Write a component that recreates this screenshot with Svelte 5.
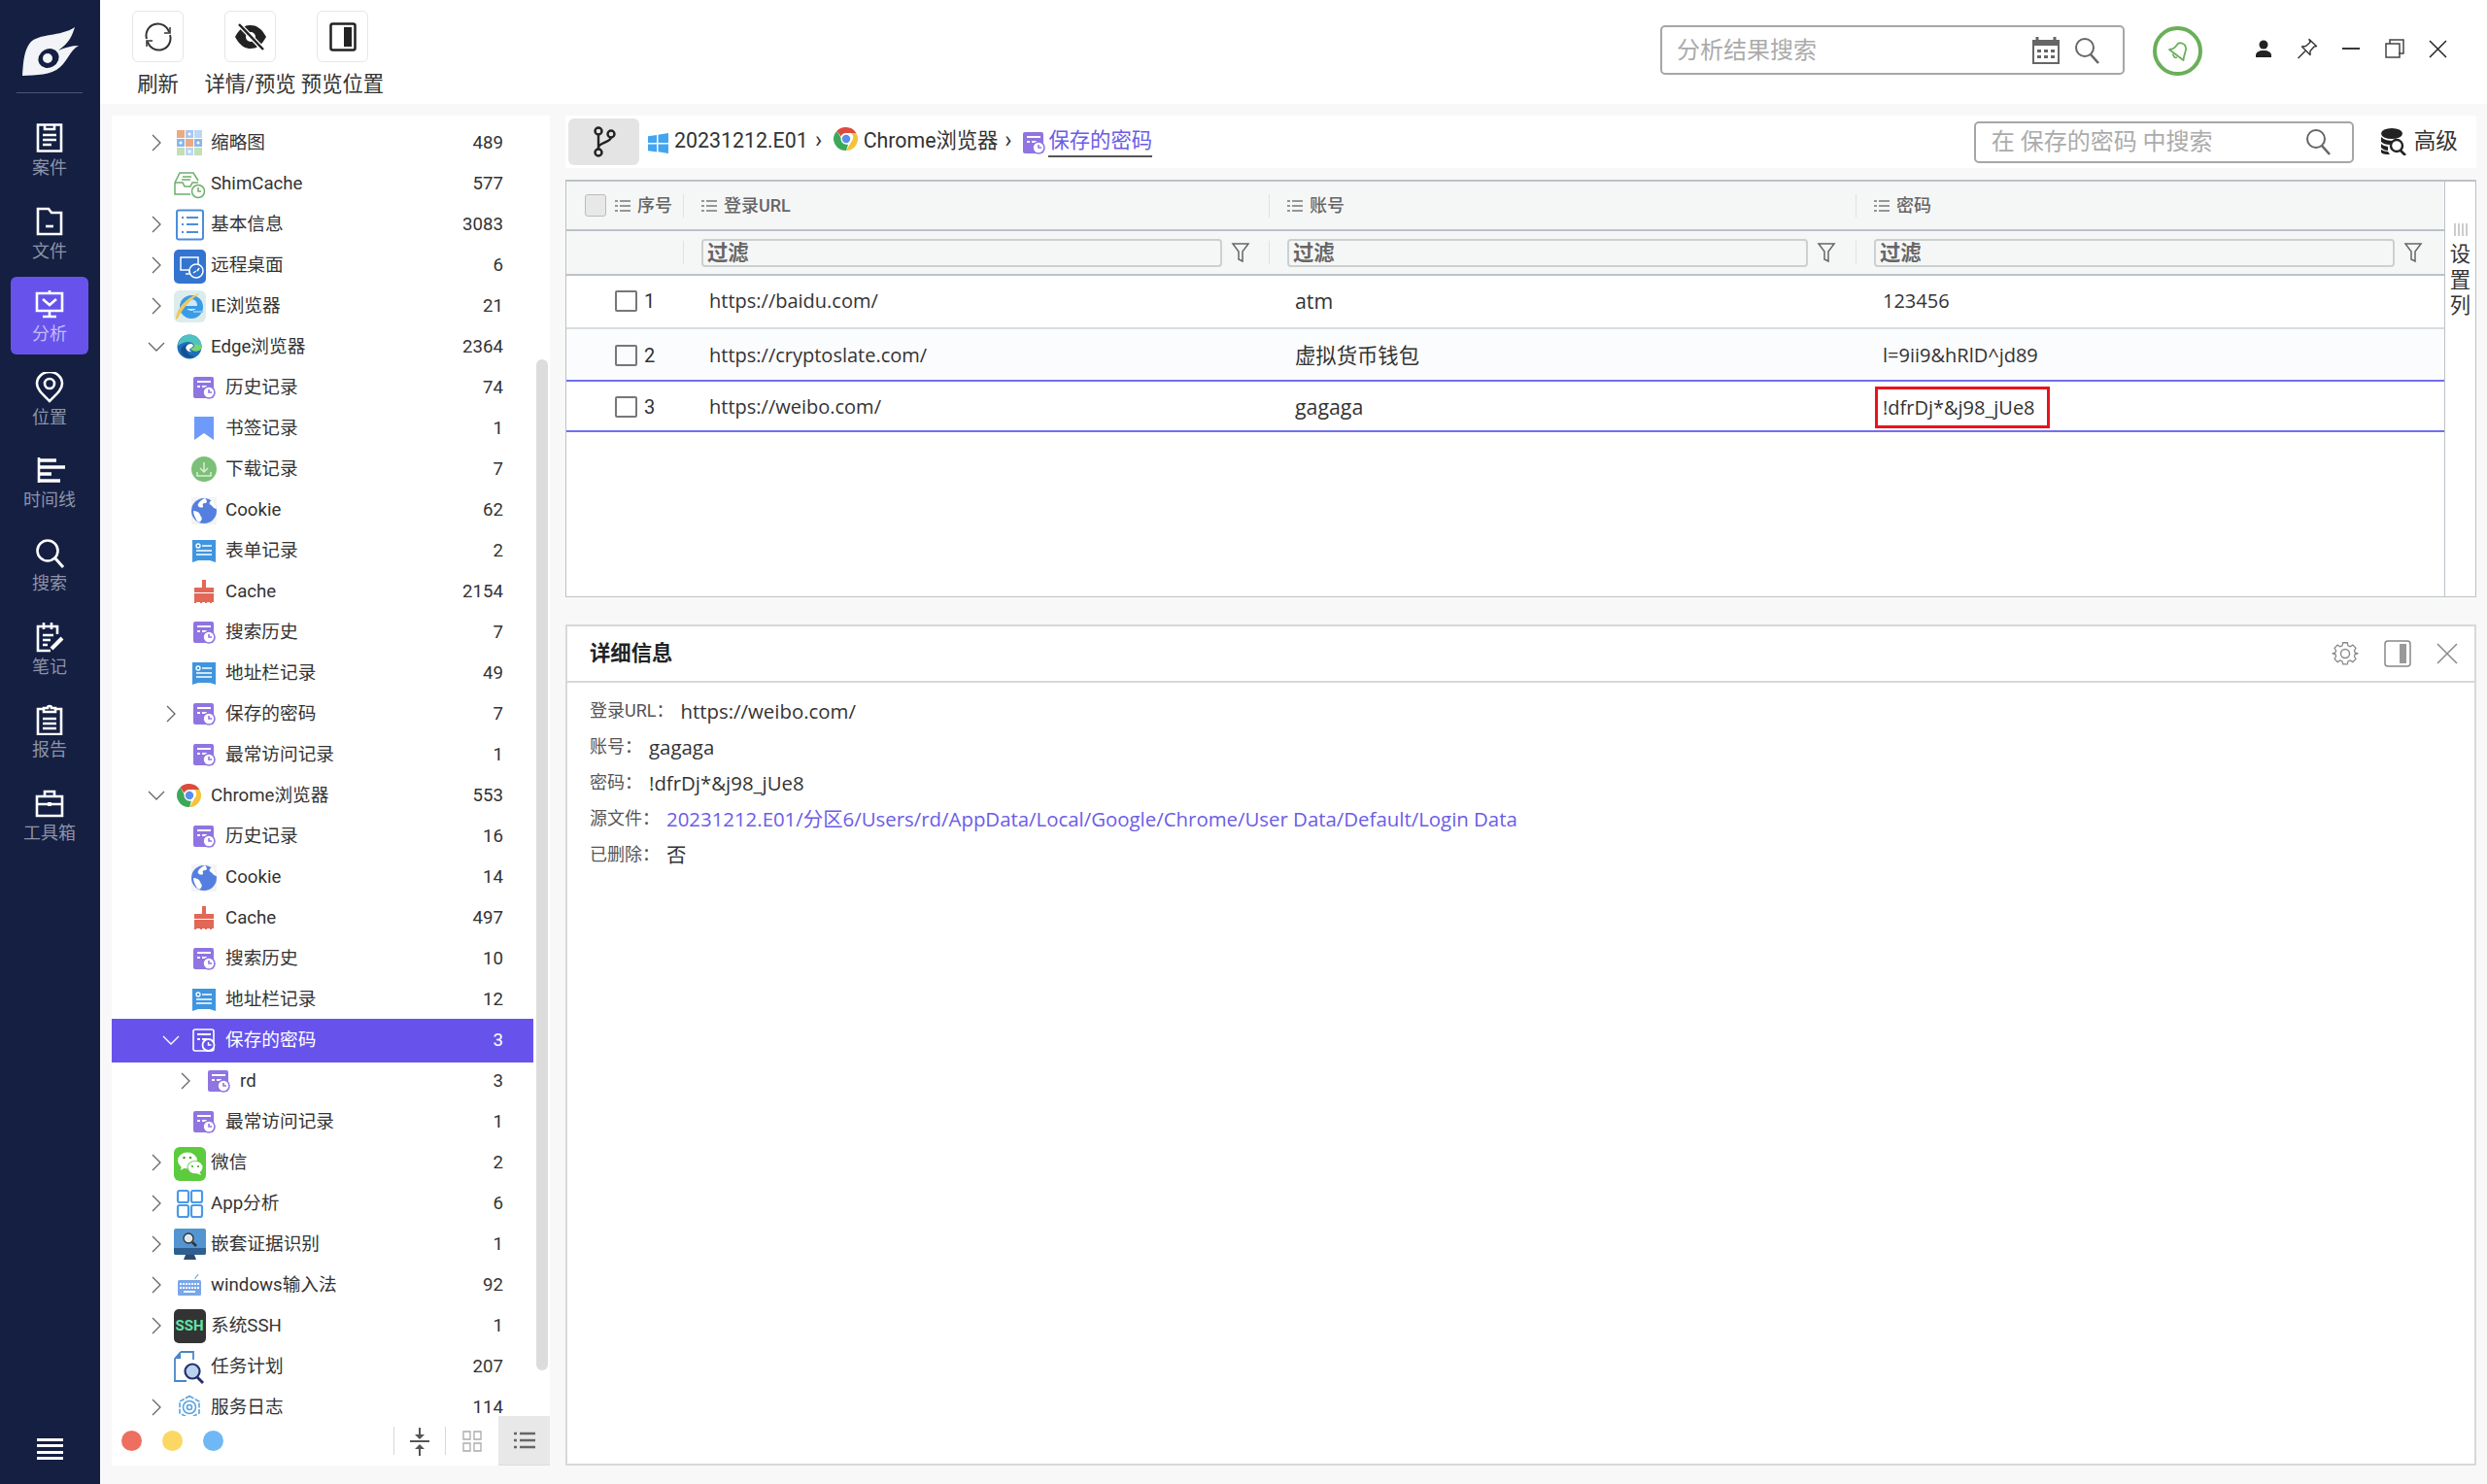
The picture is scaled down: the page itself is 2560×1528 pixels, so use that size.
<script>
	const nav = [
		{ key: 'case', label: '案件' },
		{ key: 'file', label: '文件' },
		{ key: 'analysis', label: '分析', active: true },
		{ key: 'place', label: '位置' },
		{ key: 'timeline', label: '时间线' },
		{ key: 'search', label: '搜索' },
		{ key: 'note', label: '笔记' },
		{ key: 'report', label: '报告' },
		{ key: 'tools', label: '工具箱' }
	];

	// open: true = down chevron, false = right chevron, null = none
	const tree = [
		{ level: 0, open: false, icon: 'thumb', label: '缩略图', count: 489 },
		{ level: 0, open: null, icon: 'shim', label: 'ShimCache', count: 577 },
		{ level: 0, open: false, icon: 'info', label: '基本信息', count: 3083 },
		{ level: 0, open: false, icon: 'remote', label: '远程桌面', count: 6 },
		{ level: 0, open: false, icon: 'ie', label: 'IE浏览器', count: 21 },
		{ level: 0, open: true, icon: 'edge', label: 'Edge浏览器', count: 2364 },
		{ level: 1, open: null, icon: 'hist', label: '历史记录', count: 74 },
		{ level: 1, open: null, icon: 'mark', label: '书签记录', count: 1 },
		{ level: 1, open: null, icon: 'down', label: '下载记录', count: 7 },
		{ level: 1, open: null, icon: 'globe', label: 'Cookie', count: 62 },
		{ level: 1, open: null, icon: 'form', label: '表单记录', count: 2 },
		{ level: 1, open: null, icon: 'broom', label: 'Cache', count: 2154 },
		{ level: 1, open: null, icon: 'hist', label: '搜索历史', count: 7 },
		{ level: 1, open: null, icon: 'form', label: '地址栏记录', count: 49 },
		{ level: 1, open: false, icon: 'hist', label: '保存的密码', count: 7 },
		{ level: 1, open: null, icon: 'hist', label: '最常访问记录', count: 1 },
		{ level: 0, open: true, icon: 'chrome', label: 'Chrome浏览器', count: 553 },
		{ level: 1, open: null, icon: 'hist', label: '历史记录', count: 16 },
		{ level: 1, open: null, icon: 'globe', label: 'Cookie', count: 14 },
		{ level: 1, open: null, icon: 'broom', label: 'Cache', count: 497 },
		{ level: 1, open: null, icon: 'hist', label: '搜索历史', count: 10 },
		{ level: 1, open: null, icon: 'form', label: '地址栏记录', count: 12 },
		{ level: 1, open: true, icon: 'hist', label: '保存的密码', count: 3, selected: true },
		{ level: 2, open: false, icon: 'hist', label: 'rd', count: 3 },
		{ level: 1, open: null, icon: 'hist', label: '最常访问记录', count: 1 },
		{ level: 0, open: false, icon: 'wechat', label: '微信', count: 2 },
		{ level: 0, open: false, icon: 'app', label: 'App分析', count: 6 },
		{ level: 0, open: false, icon: 'nested', label: '嵌套证据识别', count: 1 },
		{ level: 0, open: false, icon: 'keyboard', label: 'windows输入法', count: 92 },
		{ level: 0, open: false, icon: 'ssh', label: '系统SSH', count: 1 },
		{ level: 0, open: null, icon: 'task', label: '任务计划', count: 207 },
		{ level: 0, open: false, icon: 'service', label: '服务日志', count: 114 }
	];

	const columns = ['登录URL', '账号', '密码'];

	const rows = [
		{ id: 1, url: 'https://baidu.com/', user: 'atm', pass: '123456' },
		{ id: 2, url: 'https://cryptoslate.com/', user: '虚拟货币钱包', pass: 'l=9ii9&hRlD^jd89' },
		{ id: 3, url: 'https://weibo.com/', user: 'gagaga', pass: '!dfrDj*&j98_jUe8', active: true }
	];
</script>

{#snippet navIcon(key)}
	<svg class="nav-icon" viewBox="0 0 32 32" fill="none" stroke="currentColor" stroke-width="2.6">
		{#if key === 'case'}
			<path d="M4 2.5h24v27H4z" /><path d="M11 3v4h10V3M9 13h14M9 18h14M9 23h9" />
		{:else if key === 'file'}
			<path d="M4 3h11l3 4h10v22H4z" /><path d="M12 21h8" />
		{:else if key === 'analysis'}
			<path d="M3 5h26v18H3zM16 2v3M16 23v5M9 29h14" /><path d="M9 11l7 6 7-6" />
		{:else if key === 'place'}
			<path d="M16 30C9 23 3 18 3 12a13 12 0 0 1 26 0c0 6-6 11-13 18z" /><circle cx="16" cy="12" r="5" />
		{:else if key === 'timeline'}
			<path d="M5 3v26" /><path stroke-width="3.4" d="M5 6h18M5 13h27M5 20h13M5 27h22" />
		{:else if key === 'search'}
			<circle cx="14" cy="13" r="10.5" /><path stroke-width="3" d="M22 21l8 9" />
		{:else if key === 'note'}
			<path d="M24 13V5H4v25h13M10 1v7M18 1v7M9 14h11M9 19h8M9 24h5" /><path stroke-width="4" d="M18 28l11-11" />
		{:else if key === 'report'}
			<path d="M10 5H4v26h24V5h-6" /><path d="M10 8V4h4a2 2 0 0 1 4 0h4v4zM9 15h14M9 20h14M9 25h14" />
		{:else}
			<path d="M3 9h26v20H3zM11 9V4h10v5M3 17h26" /><path stroke-width="4" d="M16 15v4" />
		{/if}
	</svg>
{/snippet}

{#snippet histIcon(white)}
	<svg class="ti s24" viewBox="0 0 24 24">
		{#if white}
			<rect x="1" y="1" width="21" height="22" rx="2" fill="none" stroke="#fff" stroke-width="1.6" />
			<path d="M5 6h14M5 11h3M10 11h5" stroke="#fff" stroke-width="2" />
			<circle cx="16.500" cy="17" r="6" fill="#6753ec" stroke="#fff" stroke-width="1.8" />
			<path d="M16.500 14v3h3" fill="none" stroke="#fff" stroke-width="1.5" />
		{:else}
			<rect x="1" y="1" width="21" height="22" rx="2" fill="#8f74e2" />
			<path d="M5 6h14M5 11h3M10 11h5" stroke="#fff" stroke-width="2" />
			<circle cx="17" cy="17" r="6" fill="#fff" stroke="#8f74e2" stroke-width="1.6" />
			<path d="M17 14v3h3" fill="none" stroke="#8f74e2" stroke-width="1.600" />
		{/if}
	</svg>
{/snippet}

{#snippet chromeIcon(cls)}
	<svg class={cls} viewBox="0 0 26 26">
		<path d="M13 1a12 12 0 0 1 10.400 6H13a6 6 0 0 0-5.500 3.600L3.500 4.700A12 12 0 0 1 13 1z" fill="#dd4b3e" />
		<path d="M23.400 7A12 12 0 0 1 13 25l5.200-9a6 6 0 0 0 0-9z" fill="#f5c33b" />
		<path d="M13 25A12 12 0 0 1 3.500 4.700L8.700 13.700A6 6 0 0 0 15 18.700z" fill="#3da85a" />
		<circle cx="13" cy="13" r="5.500" fill="#fff" /><circle cx="13" cy="13" r="4.200" fill="#5a8ee8" />
	</svg>
{/snippet}

{#snippet treeIcon(name, selected)}
	{#if name === 'hist'}
		{@render histIcon(selected)}
	{:else if name === 'thumb'}
		<svg class="ti s26" viewBox="0 0 26 26">
			<rect x="0" y="0" width="8" height="8" fill="#eda884" /><rect x="9" y="0" width="8" height="8" fill="#a7c6ee" /><rect x="18" y="0" width="8" height="8" fill="#bcd6f3" />
			<rect x="0" y="9" width="8" height="8" fill="#8ab6e8" /><rect x="9" y="9" width="8" height="8" fill="#eda884" /><rect x="18" y="9" width="8" height="8" fill="#8ab6e8" />
			<rect x="0" y="18" width="8" height="8" fill="#c3dfb8" /><rect x="9" y="18" width="8" height="8" fill="#bcd6f3" /><rect x="18" y="18" width="8" height="8" fill="#c3dfb8" />
			<circle cx="4" cy="13" r="1.500" fill="#fff" /><circle cx="13" cy="4" r="1.500" fill="#fff" /><circle cx="22" cy="13" r="1.500" fill="#fff" /><circle cx="13" cy="22" r="1.500" fill="#fff" />
		</svg>
	{:else if name === 'shim'}
		<svg class="ti s33" viewBox="0 0 33 33" fill="none" stroke="#6cae6c" stroke-width="1.500">
			<path d="M1 15l5-10h14l5 8M1 15v12h16M1 15h8l2 4h6l2-4h6" /><path d="M9 9h9M8 12h9" />
			<circle cx="25" cy="24" r="6.500" fill="#fff" /><path d="M25 20v4h3" />
		</svg>
	{:else if name === 'info'}
		<svg class="ti s33" viewBox="0 0 33 33">
			<rect x="3" y="1.500" width="27" height="30" rx="2" fill="#fff" stroke="#4a8edb" stroke-width="2" />
			<path d="M8 9h2M13 9h12M8 16h2M13 16h12M8 24h2M13 24h12" stroke="#4a8edb" stroke-width="1.800" />
		</svg>
	{:else if name === 'remote'}
		<svg class="ti s33" viewBox="0 0 33 33">
			<rect width="33" height="35" rx="5" fill="#3374d0" />
			<path d="M7 8h18v13H7zM16 21v3M12 25h6" fill="none" stroke="#fff" stroke-width="1.500" />
			<circle cx="23" cy="22" r="7" fill="#3374d0" stroke="#fff" stroke-width="1.500" />
			<path d="M20 24l3-2M24 22l2-3" stroke="#fff" stroke-width="1.500" />
		</svg>
	{:else if name === 'ie'}
		<svg class="ti s33" viewBox="0 0 33 33">
			<rect width="33" height="33" rx="6" fill="#dcecec" />
			<circle cx="18" cy="17" r="12" fill="#3a9be6" />
			<circle cx="18" cy="15" r="6" fill="#cfe8fa" />
			<path d="M8 16h22v3H8zM21 21h9v2h-9z" fill="#3a9be6" /><path d="M20 21l10 0 0 2-10 0z" fill="#fff" opacity=".4" />
			<path d="M2 30C2 20 12 7 27 3 16 10 8 20 4 29z" fill="#edc95c" />
		</svg>
	{:else if name === 'edge'}
		<svg class="ti s26" viewBox="0 0 26 26">
			<circle cx="13" cy="13" r="12.500" fill="#1c6fb8" />
			<path d="M1 12C2 5 7 .5 13 .5 20 .5 25.500 6 25.500 13c0 3-3 4.500-6 4.500-3 0-5-1-5-3 3 0 4-2 3-4C15 7 8 7 1 12z" fill="#4fc3c0" />
			<path d="M25.500 13c0 3-3 4.500-6 4.500-3 0-5-1-5-3 3 0 4-2 3-4 3 0 7 1 8 2.500z" fill="#7ed36b" />
			<path d="M13 10c-3 1-4 4-3 7s4 6 8 6c-5 3-11 1-13-3S5 11 13 10z" fill="#15508f" />
			<path d="M9.500 13c1-2 3-3 5-3 2 0 3 2 2 3-1 1-2 1-3 2-1 2 1 3 2 3-3 1-7-2-6-5z" fill="#fff" />
		</svg>
	{:else if name === 'chrome'}
		{@render chromeIcon('ti s26')}
	{:else if name === 'mark'}
		<svg class="ti s24" viewBox="0 0 24 24"><path d="M2 0h20v24l-10-7L2 24z" fill="#6e9bfb" /></svg>
	{:else if name === 'down'}
		<svg class="ti s26" viewBox="0 0 26 26">
			<circle cx="13" cy="13" r="13" fill="#7cbf78" />
			<path d="M13 6v10M9 12l4 4 4-4M6 16v4h14v-4" fill="none" stroke="#d6efd2" stroke-width="1.500" />
		</svg>
	{:else if name === 'globe'}
		<svg class="ti s26" viewBox="0 0 26 26">
			<rect width="26" height="28" fill="#f4f4f4" />
			<circle cx="13" cy="14" r="13" fill="#557fdf" />
			<path d="M14 1c3 3 2 5 0 5s-3 1-2 3-4 2-5 0 1-5 7-8zM2 14c3 0 6 1 7 4s3 3 1 6-4 1-5-1-3-5-3-9zM21 3c3 3 5 6 5 9-3 0-4-3-6-4s-2-3 1-5z" fill="#fff" />
		</svg>
	{:else if name === 'form'}
		<svg class="ti s24" viewBox="0 0 24 24">
			<path d="M0 1h24v23l-6-2H6l-6 2z" fill="#3f95e0" />
			<circle cx="6" cy="7" r="2" fill="none" stroke="#fff" stroke-width="1.300" /><path d="M10 7h10M4 12h16M4 16h16" stroke="#fff" stroke-width="1.500" />
		</svg>
	{:else if name === 'broom'}
		<svg class="ti s24" viewBox="0 0 24 24">
			<path d="M10 0h4v8h8v5H2V8h8zM2 14h20v9h-2v1h-2v-1h-3v1h-2v-1h-3v1H8v-1H4v1H2z" fill="#e26757" />
		</svg>
	{:else if name === 'wechat'}
		<svg class="ti s33" viewBox="0 0 33 33">
			<rect width="33" height="35" rx="6" fill="#5ccb3e" />
			<ellipse cx="14" cy="14" rx="10" ry="8.500" fill="#fff" /><path d="M8 19l-1 5 5-3z" fill="#fff" />
			<ellipse cx="22" cy="21" rx="8.500" ry="7" fill="#5ccb3e" /><ellipse cx="22" cy="21" rx="7.500" ry="6.300" fill="#fff" />
			<path d="M26 25l2 4-5-2z" fill="#fff" />
			<circle cx="10.500" cy="11" r="1.300" fill="#4aa830" /><circle cx="17" cy="11" r="1.300" fill="#4aa830" />
			<circle cx="19" cy="20" r="1.100" fill="#4aa830" /><circle cx="25" cy="20" r="1.100" fill="#4aa830" />
		</svg>
	{:else if name === 'app'}
		<svg class="ti s33" viewBox="0 0 33 33" fill="none" stroke="#4a9ae6" stroke-width="2.200">
			<rect x="4" y="3" width="11" height="12" rx="2" /><rect x="18" y="3" width="11" height="12" rx="2" />
			<rect x="4" y="18" width="11" height="12" rx="2" /><rect x="18" y="18" width="11" height="12" rx="2" />
		</svg>
	{:else if name === 'nested'}
		<svg class="ti s33" viewBox="0 0 33 33">
			<rect y="0" width="33" height="27" rx="2" fill="#5295d1" /><path d="M0 20h33v5a2 2 0 0 1-2 2H2a2 2 0 0 1-2-2z" fill="#2f5f90" />
			<path d="M12 27h9l2 5H10z" fill="#2f4a6e" />
			<circle cx="15" cy="10" r="5" fill="#dfe8f0" stroke="#333" stroke-width="1.300" /><path d="M19 14l4 4" stroke="#333" stroke-width="2.500" />
		</svg>
	{:else if name === 'keyboard'}
		<svg class="ti s26" viewBox="0 0 26 26">
			<path d="M19 7c0-3 2-2 3-5" fill="none" stroke="#7aa7e0" stroke-width="1.200" />
			<rect x="1" y="8" width="24" height="16" rx="1.500" fill="#7aa7e8" />
			<path d="M3 12h20M3 16h20" stroke="#fff" stroke-width="1.800" stroke-dasharray="2 1" /><path d="M7 20h12" stroke="#fff" stroke-width="1.800" />
		</svg>
	{:else if name === 'ssh'}
		<span class="ssh">SSH</span>
	{:else if name === 'task'}
		<svg class="ti s33" viewBox="0 0 33 33" fill="none">
			<path d="M7 1h13v8M7 1L1 8v23h12" stroke="#4a86c8" stroke-width="1.800" /><path d="M7 1v7H1z" fill="#4a86c8" />
			<circle cx="19" cy="21" r="7.500" fill="#b9d2ee" stroke="#26306e" stroke-width="2.200" /><path d="M24 27l6 6" stroke="#26306e" stroke-width="3" />
		</svg>
	{:else if name === 'service'}
		<svg class="ti s26" viewBox="0 0 26 26" fill="none" stroke="#59a2e0" stroke-width="1.600">
			<path d="M13 1.500l10 5.500v12l-10 5.500L3 19V7z" stroke-dasharray="5 1.500" /><circle cx="13" cy="13" r="6.500" /><circle cx="13" cy="13" r="2.500" />
		</svg>
	{/if}
{/snippet}

{#snippet listGlyph()}
	<svg class="list-glyph" viewBox="0 0 16 14" stroke="#777" stroke-width="1.500"><path d="M0 2h3M5 2h11M0 7h3M5 7h11M0 12h3M5 12h11" /></svg>
{/snippet}

{#snippet filterGlyph()}
	<svg class="filter-glyph" viewBox="0 0 20 22" fill="none" stroke="#666" stroke-width="1.500"><path d="M2 2h16l-6 8v10l-4-2v-8z" /></svg>
{/snippet}

{#snippet magnifier()}
	<svg class="magnifier" viewBox="0 0 26 28" fill="none" stroke="#666" stroke-width="2"><circle cx="11" cy="11" r="9" /><path stroke-width="2.600" d="M17 18l8 9" /></svg>
{/snippet}

<div class="app">
	<aside class="sidebar">
		<div class="logo">
			<svg viewBox="0 0 103 95" width="103" height="95">
				<path d="M23 78C24 62 25 52 31 44 40 34 62 38 77 28 74 38 70 45 60 52 66 49 74 47 81 47 72 52 70 62 62 69 52 78 38 77 23 78z" fill="#f2f4f8" />
				<ellipse cx="50" cy="60" rx="11" ry="9.500" transform="rotate(-30 50 60)" fill="#141f42" />
				<circle cx="49" cy="60" r="5" fill="#f2f4f8" />
			</svg>
		</div>
		<nav class="nav">
			{#each nav as item}
				<div class="nav-item" class:active={item.active}>
					{@render navIcon(item.key)}
					<span>{item.label}</span>
				</div>
			{/each}
		</nav>
		<div class="hamburger"><i></i><i></i><i></i><i></i></div>
	</aside>

	<div class="main">
		<header class="topbar">
			<div class="tool">
				<div class="tool-btn">
					<svg viewBox="0 0 30 30" width="30" height="30" fill="none" stroke="#333" stroke-width="2">
						<path d="M3 17A12 12 0 0 1 26 10M27 13A12 12 0 0 1 4 20" />
						<path d="M27 5v6h-6M3 25v-6h6" stroke-width="1.500" />
					</svg>
				</div>
				<span>刷新</span>
			</div>
			<div class="tool">
				<div class="tool-btn">
					<svg viewBox="0 0 34 30" width="34" height="30">
						<path d="M1 15C6 6 11 3 17 3s11 3 16 12c-5 9-10 12-16 12S6 24 1 15z" fill="#222" />
						<circle cx="17" cy="15" r="5" fill="#fff" />
						<path d="M5 2l25 26" stroke="#fff" stroke-width="5" /><path d="M5 2l25 26" stroke="#222" stroke-width="2.500" />
					</svg>
				</div>
				<span>详情/预览</span>
			</div>
			<div class="tool">
				<div class="tool-btn">
					<svg viewBox="0 0 28 30" width="28" height="30"><rect x="1.500" y="1.500" width="25" height="27" rx="2" fill="#fff" stroke="#222" stroke-width="2.500" /><rect x="15" y="5" width="8" height="20" fill="#222" /></svg>
				</div>
				<span>预览位置</span>
			</div>

			<div class="global-search">
				<span class="placeholder">分析结果搜索</span>
				<svg class="calendar" viewBox="0 0 30 30">
					<path d="M1 4h28v25H1z" fill="#666" /><path d="M6 1v6M24 1v6" stroke="#666" stroke-width="3" /><path d="M3 10h24v17H3z" fill="#fff" />
					<path d="M6 14h4v3H6zM13 14h4v3h-4zM20 14h4v3h-4zM6 20h4v3H6zM13 20h4v3h-4zM20 20h4v3h-4z" fill="#666" />
				</svg>
				{@render magnifier()}
			</div>
			<div class="status">
				<svg viewBox="0 0 26 26" width="26" height="26" fill="none" stroke="#6aaf5a" stroke-width="1.800" stroke-linejoin="round">
					<path d="M4 11C8 11 10 9 12 6 14 3 20 4 21 9 22 12 19 15 18.500 22z" />
					<path d="M8 15.500C7.500 18 10 20 12 19" />
				</svg>
			</div>
			<div class="window-ctrl">
				<span class="ctrl">
					<svg viewBox="0 0 16 18" width="16" height="18"><circle cx="8" cy="5" r="4.500" fill="#222" /><path d="M0 18v-2c0-3 3-5 8-5s8 2 8 5v2z" fill="#222" /></svg>
				</span>
				<span class="ctrl">
					<svg viewBox="0 0 22 22" width="22" height="22" fill="none" stroke="#333" stroke-width="1.400" stroke-linejoin="round">
						<path d="M13 1.500l7.500 7-2.500.500-4 4.500v4l-8.500-8.500 4-.500 4.500-4z" /><path d="M9 13.500l-7.500 7.500" />
					</svg>
				</span>
				<span class="ctrl"><svg viewBox="0 0 18 4" width="18" height="4"><path d="M0 2h18" stroke="#222" stroke-width="1.800" /></svg></span>
				<span class="ctrl">
					<svg viewBox="0 0 20 20" width="20" height="20" fill="none" stroke="#444" stroke-width="1.500"><path d="M5 5V1h14v14h-5" /><rect x="1" y="5" width="14" height="14" /></svg>
				</span>
				<span class="ctrl"><svg viewBox="0 0 19 19" width="19" height="19"><path d="M1 1l17 17M18 1L1 18" stroke="#222" stroke-width="1.500" /></svg></span>
			</div>
		</header>

		<div class="content">
			<section class="tree-panel">
				<div class="tree">
					{#each tree as node}
						<div class="node level-{node.level}" class:selected={node.selected}>
							<span class="chev">
								{#if node.open === true}
									<svg viewBox="0 0 18 10" width="18" height="10" fill="none" stroke="currentColor" stroke-width="1.300"><path d="M1 1l8 8 8-8" /></svg>
								{:else if node.open === false}
									<svg viewBox="0 0 10 18" width="10" height="18" fill="none" stroke="currentColor" stroke-width="1.300"><path d="M1 1l8 8-8 8" /></svg>
								{/if}
							</span>
							<span class="node-icon">{@render treeIcon(node.icon, node.selected)}</span>
							<span class="node-label">{node.label}</span>
							<span class="node-count">{node.count}</span>
						</div>
					{/each}
				</div>
				<div class="scroll-thumb"></div>
				<footer class="tree-foot">
					<i class="dot red"></i><i class="dot yellow"></i><i class="dot blue"></i>
					<div class="foot-tools">
						<span class="foot-btn wide">
							<svg viewBox="0 0 20 30" width="20" height="30" fill="#555"><path d="M9 1h2v7h4l-5 5-5-5h4zM0 14h20v2H0zM10 18l5 5h-4v7H9v-7H5z" /></svg>
						</span>
						<span class="foot-btn">
							<svg viewBox="0 0 20 22" width="20" height="22" fill="none" stroke="#aaa" stroke-width="1.300"><path d="M1 1h7v8H1zM12 1h7v8h-7zM1 13h7v8H1zM12 13h7v8h-7z" /></svg>
						</span>
						<span class="foot-btn current">
							<svg viewBox="0 0 22 18" width="22" height="18" stroke="#666" stroke-width="2.600"><path d="M0 2h3M6 2h16M0 9h3M6 9h16M0 16h3M6 16h16" /></svg>
						</span>
					</div>
				</footer>
			</section>

			<div class="right">
				<div class="crumbs">
					<span class="branch-btn">
						<svg viewBox="0 0 24 32" width="24" height="32" fill="none" stroke="#222" stroke-width="2.400">
							<circle cx="6" cy="5" r="3.500" /><circle cx="6" cy="27" r="3.500" /><circle cx="19" cy="8" r="3.500" />
							<path d="M6 9v14M6 22c0-5 12-5 13-10.500" />
						</svg>
					</span>
					<svg class="win" viewBox="0 0 22 22"><path d="M0 3.500l9.500-1.500v8.500H0zM11 1.800L22 0v10.500H11zM0 12h9.500v8.500L0 19zM11 12h11v10l-11-1.800z" fill="#43a5f0" /></svg>
					<span class="crumb">20231212.E01</span>
					<span class="sep-arrow">›</span>
					<span class="chrome-up">{@render chromeIcon('chrome-crumb')}</span>
					<span class="crumb">Chrome浏览器</span>
					<span class="sep-arrow second">›</span>
					<span class="crumb-hist">{@render histIcon(false)}</span>
					<span class="crumb current">保存的密码</span>

					<div class="crumb-search">
						<span class="placeholder">在 保存的密码 中搜索</span>
						{@render magnifier()}
					</div>
					<div class="advanced">
						<svg viewBox="0 0 28 28" width="28" height="28">
							<ellipse cx="12" cy="5.500" rx="11" ry="5.500" fill="#222" /><path d="M1 9c3 3 8 4 12 4l-3 4c-4 0-7-1-9-3zM1 16c2 2 4 2 7 3v4c-3 0-5-1-7-3zM1 22c2 1 4 2 7 2l2 3c-4 0-7 0-9-2z" fill="#222" />
							<circle cx="17" cy="18" r="6" fill="#fff" stroke="#222" stroke-width="2.400" /><path d="M21 23l5 5" stroke="#222" stroke-width="2.600" />
						</svg>
						<span>高级</span>
					</div>
				</div>

				<section class="grid-panel">
					<div class="grid">
						<div class="row head">
							<div class="cell first">
								<span class="head-check"></span>
								{@render listGlyph()}
								<span>序号</span>
							</div>
							{#each columns as col}
								<div class="cell">
									<i class="sep"></i>
									{@render listGlyph()}
									<span>{col}</span>
								</div>
							{/each}
						</div>
						<div class="row filters">
							<div class="cell first"></div>
							{#each columns as col}
								<div class="cell">
									<i class="sep"></i>
									<span class="filter-input">过滤</span>
									{@render filterGlyph()}
								</div>
							{/each}
						</div>
						{#each rows as row}
							<div class="row data" class:active={row.active}>
								<div class="cell num"><span class="check"></span><span>{row.id}</span></div>
								<div class="cell text-url">{row.url}</div>
								<div class="cell text-user">{row.user}</div>
								<div class="cell text-pass">
									{#if row.active}
										<span class="marked">{row.pass}</span>
									{:else}
										{row.pass}
									{/if}
								</div>
							</div>
						{/each}
					</div>
					<div class="col-settings">
						<svg viewBox="0 0 14 13" width="14" height="13" stroke="#999" stroke-width="1"><path d="M1 0v13M5 0v13M9 0v13M13 0v13" /></svg>
						<span>设</span><span>置</span><span>列</span>
					</div>
				</section>

				<section class="detail">
					<div class="detail-head">
						<h2>详细信息</h2>
						<div class="detail-tools">
							<svg viewBox="0 0 28 28" width="28" height="28" fill="none" stroke="#888" stroke-width="1.400">
								<path d="M11.500 1.500h5l.8 3.400 2.400 1 3-1.800 3.500 3.500-1.800 3 1 2.400 3.400.8v0l-3.400.9-1 2.400 1.800 3-3.500 3.500-3-1.800-2.400 1-.8 3.400h-5l-.8-3.400-2.400-1-3 1.800-3.500-3.500 1.800-3-1-2.400-3.400-.9v0l3.400-.8 1-2.400-1.800-3 3.500-3.500 3 1.800 2.400-1z" transform="translate(1.400 1.400) scale(.9)" />
								<circle cx="14" cy="14" r="4.500" />
							</svg>
							<svg viewBox="0 0 28 28" width="28" height="28"><rect x="1" y="1" width="26" height="26" rx="3" fill="none" stroke="#888" stroke-width="1.500" /><rect x="16" y="4" width="7" height="20" fill="#999" /></svg>
							<svg viewBox="0 0 22 22" width="22" height="22"><path d="M1 1l20 20M21 1L1 21" stroke="#888" stroke-width="1.500" /></svg>
						</div>
					</div>
					<div class="detail-body">
						<div class="kv"><span class="k">登录URL：</span><span>https://weibo.com/</span></div>
						<div class="kv"><span class="k">账号：</span><span>gagaga</span></div>
						<div class="kv"><span class="k">密码：</span><span>!dfrDj*&amp;j98_jUe8</span></div>
						<div class="kv"><span class="k">源文件：</span><span class="link">20231212.E01/分区6/Users/rd/AppData/Local/Google/Chrome/User Data/Default/Login Data</span></div>
						<div class="kv"><span class="k">已删除：</span><span>否</span></div>
					</div>
				</section>
			</div>
		</div>
	</div>
</div>

<style>
	:global(body) {
		margin: 0;
		background: #f8f8f8;
	}

	.app {
		display: flex;
		width: 2560px;
		height: 1528px;
		overflow: hidden;
		font-family: Roboto, 'Noto Sans CJK SC', sans-serif;
		color: #333;
	}

	/* Left nav */
	.sidebar {
		width: 103px;
		flex-shrink: 0;
		background: #141f42;
		display: flex;
		flex-direction: column;
	}

	.logo {
		height: 114px;
		position: relative;
	}

	.logo::after {
		content: '';
		position: absolute;
		left: 17px;
		top: 95px;
		width: 68px;
		height: 1px;
		background: #4a5478;
	}

	.logo svg {
		display: block;
	}

	.nav {
		display: flex;
		flex-direction: column;
		gap: 5.6px;
		padding-left: 11px;
	}

	.nav-item {
		width: 80px;
		height: 80px;
		box-sizing: border-box;
		padding-top: 12px;
		border-radius: 6px;
		display: flex;
		flex-direction: column;
		align-items: center;
		color: #fff;
		font-size: 18px;
	}

	.nav-item span {
		color: #8d93a8;
		line-height: 24px;
		margin-top: 3px;
	}

	.nav-item.active {
		background: #6753ec;
	}

	.nav-item.active span {
		color: #c3bcf6;
	}

	.nav-icon {
		width: 32px;
		height: 32px;
	}

	.hamburger {
		margin-top: auto;
		margin-bottom: 25px;
		margin-left: 38px;
		width: 27px;
		display: flex;
		flex-direction: column;
		gap: 3.500px;
	}

	.hamburger i {
		height: 3px;
		background: #fff;
	}

	/* Top bar */
	.main {
		flex: 1;
		min-width: 0;
		display: flex;
		flex-direction: column;
	}

	.topbar {
		height: 107px;
		flex-shrink: 0;
		box-sizing: border-box;
		background: #fff;
		padding: 11px 28px 0 12px;
		display: flex;
		align-items: flex-start;
	}

	.tool {
		width: 95px;
		display: flex;
		flex-direction: column;
		align-items: center;
		font-size: 21.330px;
		color: #333;
	}

	.tool span {
		margin-top: 8px;
		line-height: 30px;
		white-space: nowrap;
	}

	.tool-btn {
		width: 53px;
		height: 53px;
		box-sizing: border-box;
		border: 1px solid #e6e6e6;
		border-radius: 6px;
		display: flex;
		align-items: center;
		justify-content: center;
	}

	.global-search {
		margin-left: auto;
		margin-top: 15px;
		width: 478px;
		height: 51px;
		box-sizing: border-box;
		border: 2px solid #a6a6a6;
		border-radius: 5px;
		display: flex;
		align-items: center;
		padding: 0 24px 0 15px;
	}

	.placeholder {
		font-size: 24px;
		line-height: 30px;
		color: #ababab;
		white-space: nowrap;
	}

	.calendar {
		width: 30px;
		height: 30px;
		margin-left: auto;
		margin-right: 14px;
	}

	.magnifier {
		width: 26px;
		height: 28px;
	}

	.status {
		margin: 16px 40px 0 29px;
		width: 51px;
		height: 51px;
		box-sizing: border-box;
		border: 4px solid #6aaf5a;
		border-radius: 50%;
		display: flex;
		align-items: center;
		justify-content: center;
	}

	.window-ctrl {
		display: flex;
		margin-top: 27px;
		height: 24px;
	}

	.ctrl {
		width: 45px;
		display: flex;
		align-items: center;
		justify-content: center;
	}

	/* Body */
	.content {
		flex: 1;
		min-height: 0;
		display: flex;
		gap: 16px;
		padding: 12px 11px 19px 12px;
	}

	.tree-panel {
		width: 451px;
		flex-shrink: 0;
		background: #fff;
		display: flex;
		flex-direction: column;
		position: relative;
	}

	.tree {
		flex: 1;
		min-height: 0;
		overflow: hidden;
		padding-top: 7px;
		width: 434px;
	}

	.node {
		height: 42px;
		display: flex;
		align-items: center;
		box-sizing: border-box;
		padding-right: 31px;
		font-size: 18.670px;
		line-height: 18px;
		color: #333;
		white-space: nowrap;
	}

	.level-0 {
		padding-left: 34px;
	}

	.level-1 {
		padding-left: 49px;
	}

	.level-2 {
		padding-left: 64px;
	}

	.node.selected {
		height: 45px;
		margin: -1.500px 0;
		background: #6753ec;
		color: #fff;
		position: relative;
	}

	.chev {
		width: 24px;
		height: 24px;
		flex-shrink: 0;
		color: #666;
		display: flex;
		align-items: center;
		justify-content: center;
	}

	.selected .chev {
		color: #fff;
	}

	.node-icon {
		width: 44px;
		flex-shrink: 0;
		display: flex;
		align-items: center;
		justify-content: center;
		padding-right: 0;
	}

	.node-count {
		margin-left: auto;
	}

	.ti {
		display: block;
		overflow: visible;
	}

	.s24 {
		width: 24px;
		height: 24px;
	}

	.s26 {
		width: 26px;
		height: 26px;
	}

	.s33 {
		width: 33px;
		height: 33px;
	}

	.ssh {
		width: 33px;
		height: 35px;
		box-sizing: border-box;
		border-radius: 5px;
		background: #333;
		color: #5fe6a8;
		font: 700 15px/35px 'Liberation Sans Narrow', Roboto, sans-serif;
		text-align: center;
	}

	.scroll-thumb {
		position: absolute;
		right: 2px;
		top: 251px;
		width: 12px;
		height: 1041px;
		border-radius: 6px;
		background: #dcdcdc;
	}

	.tree-foot {
		height: 51px;
		flex-shrink: 0;
		background: #fff;
		display: flex;
		align-items: center;
		gap: 21px;
		padding-left: 10px;
		position: relative;
	}

	.dot {
		width: 21px;
		height: 21px;
		border-radius: 50%;
	}

	.red {
		background: #ee6f5f;
	}

	.yellow {
		background: #fbd764;
	}

	.blue {
		background: #6fb8f5;
	}

	.foot-tools {
		margin-left: auto;
		display: flex;
		align-items: center;
		height: 100%;
	}

	.foot-btn {
		width: 54px;
		height: 100%;
		display: flex;
		align-items: center;
		justify-content: center;
		position: relative;
	}

	.foot-btn.wide::before,
	.foot-btn.wide::after {
		content: '';
		position: absolute;
		top: 11px;
		height: 29px;
		width: 1px;
		background: #d8d8d8;
	}

	.foot-btn.wide::before {
		left: 0;
	}

	.foot-btn.wide::after {
		right: 0;
	}

	.foot-btn.current {
		background: #e8e8e8;
		width: 53px;
		border-bottom: 1px solid #ddd;
		box-sizing: border-box;
	}

	.right {
		flex: 1;
		min-width: 0;
		display: flex;
		flex-direction: column;
	}

	/* Breadcrumb */
	.crumbs {
		height: 54px;
		flex-shrink: 0;
		background: #fff;
		display: flex;
		align-items: center;
		padding: 0 19px 0 3px;
		font-size: 21.330px;
		white-space: nowrap;
	}

	.branch-btn {
		width: 73px;
		height: 48px;
		border-radius: 6px;
		background: #e4e4e4;
		display: flex;
		align-items: center;
		justify-content: center;
	}

	.win {
		width: 21px;
		height: 21px;
		margin: 2px 6px 0 9px;
	}

	.crumb {
		color: #333;
		line-height: 30px;
		margin-bottom: 3px;
	}

	.crumb.current {
		color: #6b5ce7;
		border-bottom: 2px solid #555;
		margin: -1px 0 0;
	}

	.sep-arrow {
		width: 26px;
		padding-right: 4px;
		box-sizing: border-box;
		text-align: center;
		font-size: 24px;
		line-height: 24px;
		margin-top: -4px;
	}

	.sep-arrow.second {
		width: 25px;
	}

	.chrome-up {
		margin: -7px 5px 0 0;
		display: flex;
	}

	.chrome-up :global(.chrome-crumb) {
		width: 26px;
		height: 26px;
	}

	.crumb-hist {
		margin: 2px 3px 0 0;
		display: flex;
	}

	.crumb-search {
		margin-left: auto;
		width: 391px;
		height: 43px;
		box-sizing: border-box;
		border: 2px solid #a6a6a6;
		border-radius: 5px;
		display: flex;
		align-items: center;
		justify-content: space-between;
		padding: 0 22px 0 16px;
	}

	.advanced {
		margin-left: 27px;
		display: flex;
		align-items: center;
		gap: 7px;
		font-size: 22.670px;
		line-height: 30px;
	}

	/* Table */
	.grid-panel {
		margin-top: 12px;
		height: 430px;
		flex-shrink: 0;
		box-sizing: border-box;
		display: flex;
		background: #fff;
		border: 1px solid #bcc2c7;
		border-top-width: 2px;
	}

	.grid {
		flex: 1;
		min-width: 0;
	}

	.row {
		display: grid;
		grid-template-columns: 120px 603px 604px 606px;
	}

	.cell {
		display: flex;
		align-items: center;
		min-width: 0;
		white-space: nowrap;
	}

	.head {
		height: 51px;
		box-sizing: border-box;
		background: #f5f7f7;
		border-bottom: 2px solid #bcc2c7;
		font-size: 18px;
		font-weight: 500;
		line-height: 24px;
		color: #666;
	}

	.head .cell.first {
		padding-left: 19px;
	}

	.head-check {
		width: 22px;
		height: 23px;
		box-sizing: border-box;
		background: #e8e8e8;
		border: 1px solid #bbb;
		border-radius: 3px;
		margin-right: 9px;
	}

	.list-glyph {
		width: 16px;
		height: 14px;
		flex-shrink: 0;
		margin-right: 7px;
	}

	.sep {
		width: 1px;
		height: 24px;
		background: #dfe2e2;
		flex-shrink: 0;
		margin-right: 18px;
	}

	.filters {
		height: 46px;
		box-sizing: border-box;
		background: #f5f7f7;
		border-bottom: 2px solid #bcc2c7;
	}

	.filter-input {
		width: 536px;
		height: 29px;
		box-sizing: border-box;
		border: 2px solid #cdd0d0;
		border-radius: 4px;
		font-size: 21.330px;
		font-weight: 700;
		line-height: 25px;
		color: #666;
		padding-left: 4px;
	}

	.filter-glyph {
		width: 20px;
		height: 22px;
		margin-left: 9px;
		flex-shrink: 0;
	}

	.data {
		height: 55px;
		box-sizing: border-box;
		padding-bottom: 2px;
		font-family: 'Open Sans', 'Noto Sans CJK SC', sans-serif;
		font-size: 20px;
		line-height: 28px;
		color: #333;
		border-bottom: 2px solid #d8dcdc;
	}

	.data:nth-child(4) {
		height: 54px;
		padding: 1px 0 0;
		background: #fbfcfe;
		border-bottom-color: #7070f0;
	}

	.data.active {
		height: 52px;
		padding: 2px 0 0;
		border-bottom-color: #7070f0;
	}

	.num {
		padding-left: 50px;
		gap: 7px;
		font-family: Roboto, sans-serif;
	}

	.check {
		width: 23px;
		height: 22px;
		box-sizing: border-box;
		border: 2px solid #777;
		border-radius: 2px;
	}

	.text-url {
		padding-left: 27px;
	}

	.text-user {
		padding-left: 27px;
		font-size: 21.330px;
	}

	.text-pass {
		padding-left: 28px;
	}

	.marked {
		margin-left: -8px;
		width: 180px;
		height: 43px;
		box-sizing: border-box;
		border: 3px solid #e8141e;
		padding-left: 5px;
		line-height: 37px;
	}

	.col-settings {
		width: 32px;
		flex-shrink: 0;
		box-sizing: border-box;
		border-left: 1px solid #bcc2c7;
		padding-top: 43px;
		display: flex;
		flex-direction: column;
		align-items: center;
		font-size: 21.330px;
		line-height: 26.500px;
		color: #333;
	}

	.col-settings svg {
		margin-bottom: 6px;
	}

	/* Detail pane */
	.detail {
		margin-top: 28px;
		flex: 1;
		min-height: 0;
		box-sizing: border-box;
		background: #fff;
		border: 2px solid #d8d8d8;
	}

	.detail-head {
		height: 58px;
		box-sizing: border-box;
		border-bottom: 2px solid #d8d8d8;
		display: flex;
		align-items: center;
		padding: 0 17px 0 23px;
	}

	.detail-head h2 {
		margin: 0;
		font-size: 21.330px;
		line-height: 30px;
		font-weight: 700;
		color: #222;
	}

	.detail-tools {
		margin-left: auto;
		display: flex;
		align-items: center;
		gap: 26px;
	}

	.detail-body {
		padding: 10px 0 0 23px;
	}

	.kv {
		height: 37px;
		display: flex;
		align-items: center;
		font-family: 'Open Sans', 'Noto Sans CJK SC', sans-serif;
		font-size: 20.400px;
		line-height: 28px;
		color: #333;
	}

	.k {
		font-family: Roboto, 'Noto Sans CJK SC', sans-serif;
		font-size: 18px;
		color: #555;
		margin-right: 7px;
	}

	.link {
		color: #6b5ce7;
	}
</style>
